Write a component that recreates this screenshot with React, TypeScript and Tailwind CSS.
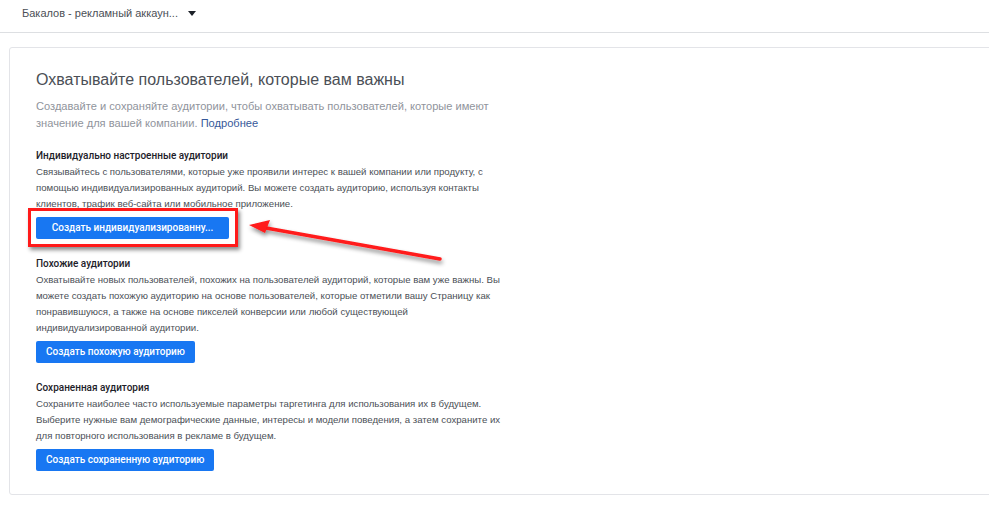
import React from 'react';

const sections = [
  {
    title: 'Индивидуально настроенные аудитории',
    text: 'Связывайтесь с пользователями, которые уже проявили интерес к вашей компании или продукту, с помощью индивидуализированных аудиторий. Вы можете создать аудиторию, используя контакты клиентов, трафик веб-сайта или мобильное приложение.',
    button: 'Создать индивидуализированну...',
    highlight: true,
  },
  {
    title: 'Похожие аудитории',
    text: 'Охватывайте новых пользователей, похожих на пользователей аудиторий, которые вам уже важны. Вы можете создать похожую аудиторию на основе пользователей, которые отметили вашу Страницу как понравившуюся, а также на основе пикселей конверсии или любой существующей индивидуализированной аудитории.',
    button: 'Создать похожую аудиторию',
    highlight: false,
  },
  {
    title: 'Сохраненная аудитория',
    text: 'Сохраните наиболее часто используемые параметры таргетинга для использования их в будущем. Выберите нужные вам демографические данные, интересы и модели поведения, а затем сохраните их для повторного использования в рекламе в будущем.',
    button: 'Создать сохраненную аудиторию',
    highlight: false,
  },
];

const App = () => {
  return (
    <div className="relative w-[989px] h-[512px] overflow-hidden bg-white font-['Liberation_Sans',Arial,sans-serif]">
      {/* top bar */}
      <div className="h-[33px] border-b border-[#dddfe2] flex items-center pl-[22px] pb-[6px]">
        <span className="text-[11px] text-[#4b4f56]">Бакалов - рекламный аккаун...</span>
        <svg width="8" height="5" viewBox="0 0 8 5" className="ml-[10px]">
          <path d="M0 0 H8 L4 5 Z" fill="#1d2129" />
        </svg>
      </div>

      <div className="pt-[14px] pl-[9px]">
        <div className="w-[1000px] border border-[#e3e4e8] rounded-[3px] pl-[26px] pt-[20px] pb-[23px]">
          <h1 className="text-[16px] leading-[24px] text-[#4b4f56]">Охватывайте пользователей, которые вам важны</h1>
          <p className="mt-[6px] w-[470px] text-[11.1px] leading-[17px] text-[#90949c]">
            Создавайте и сохраняйте аудитории, чтобы охватывать пользователей, которые имеют значение для вашей компании.{' '}
            <span className="text-[#365899]">Подробнее</span>
          </p>

          <div className="mt-[16px] flex flex-col gap-[17px]">
            {sections.map((s, i) => (
              <div key={i} className="w-[470px]">
                <div className="font-['Roboto',sans-serif] text-[10px] leading-[16px] font-medium text-[#1d2129]">{s.title}</div>
                <p className="text-[9.65px] leading-[16px] text-[#4b4f56]">{s.text}</p>
                <div className="mt-[5px] flex">
                  <div className="relative">
                    {s.highlight && (
                      <div className="absolute -left-[8px] -top-[9px] w-[210px] h-[39px] border-[3px] border-[#ff1a1a] shadow-[2px_3px_4px_rgba(0,0,0,0.45)]" />
                    )}
                    <button
                      className={`relative block h-[22px] px-[10px] rounded-[2px] bg-[#1877f2] text-white font-['Roboto',sans-serif] text-[10px] font-medium leading-[22px] ${s.highlight ? 'w-[193px]' : ''}`}
                    >
                      {s.button}
                    </button>
                  </div>
                </div>
              </div>
            ))}
          </div>
        </div>
      </div>

      {/* annotation arrow */}
      <svg className="absolute left-0 top-0" width="989" height="512" style={{ pointerEvents: 'none' }}>
        <defs>
          <filter id="sh" x="-20%" y="-50%" width="140%" height="200%">
            <feDropShadow dx="1" dy="3" stdDeviation="2" floodColor="#000" floodOpacity="0.45" />
          </filter>
        </defs>
        <g filter="url(#sh)">
          <path d="M440 259 L266 228" stroke="#ff1a1a" strokeWidth="3.5" strokeLinecap="round" />
          <path d="M249 225 L270 220 L265 233 Z" fill="#ff1a1a" />
        </g>
      </svg>
    </div>
  );
};

export default App;
